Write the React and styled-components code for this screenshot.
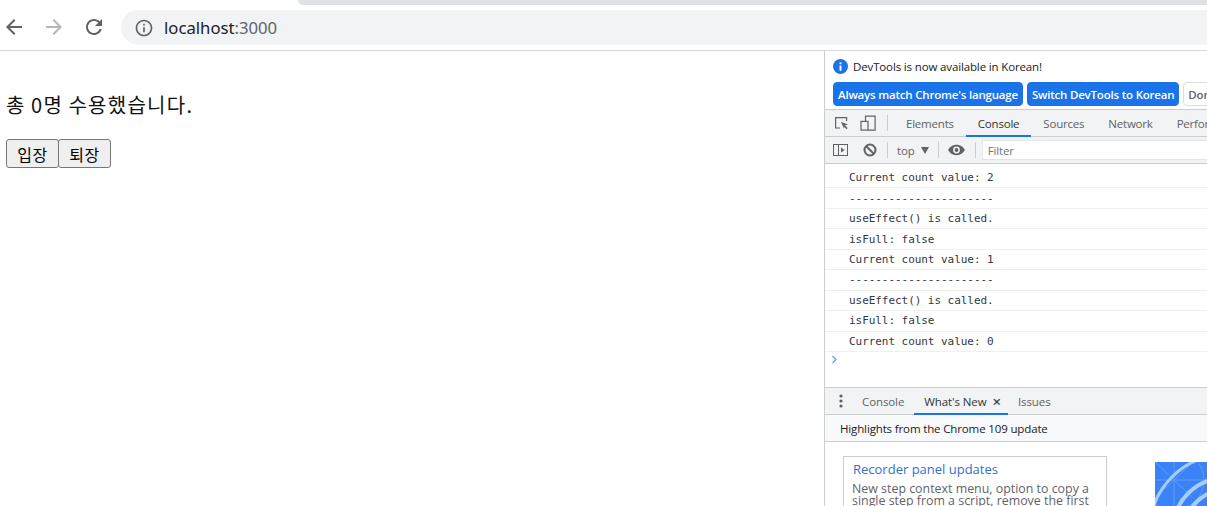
import React from 'react';
import styled, { createGlobalStyle } from 'styled-components';

const GlobalStyle = createGlobalStyle`
  html, body {
    margin: 0;
    padding: 0;
    background: #fff;
    overflow: hidden;
  }
  * {
    box-sizing: border-box;
  }
`;

const Window = styled.div`
  width: 1207px;
  height: 506px;
  overflow: hidden;
  display: flex;
  flex-direction: column;
  font-family: 'Open Sans', 'Noto Sans', sans-serif;
`;

const TabStrip = styled.div`
  height: 5px;
  margin-left: 298px;
  background: #dee1e6;
  border-bottom-left-radius: 6px;
  flex: none;
`;

const BrowserBar = styled.header`
  height: 46px;
  flex: none;
  display: flex;
  align-items: flex-start;
  padding: 5px 0 0 2px;
  border-bottom: 1px solid #d7d7d9;
`;

const NavButton = styled.div`
  width: 24px;
  height: 24px;
  margin: 5px 16px 0 0;
  flex: none;
  color: ${(p) => (p.$off ? '#b4b6b8' : '#5f6368')};
  svg {
    display: block;
    fill: currentColor;
  }
`;

const AddressBar = styled.div`
  flex: 1;
  height: 35px;
  margin-left: -1px;
  margin-right: -40px;
  background: #f1f3f4;
  border-radius: 18px;
  display: flex;
  align-items: center;
  padding-left: 13px;
  gap: 10px;
  color: #5f6368;
  font-family: 'Noto Sans', sans-serif;
  font-size: 16.7px;
  svg {
    fill: #5f6368;
    flex: none;
  }
  b {
    font-weight: 400;
    color: #202124;
  }
`;

const Body = styled.div`
  flex: 1;
  display: flex;
  min-height: 0;
`;

const Page = styled.main`
  width: 824px;
  flex: none;
  padding: 40px 0 0 6px;
  font-family: 'Noto Sans CJK KR', 'Liberation Sans', sans-serif;
  color: #111;
`;

const Headline = styled.p`
  margin: 0 0 20px;
  font-size: 20px;
  line-height: 28px;
  letter-spacing: 1.27px;
  word-spacing: -0.4px;
`;

const Buttons = styled.div`
  display: flex;
`;

const PageButton = styled.button`
  width: 53px;
  height: 29px;
  margin-right: -1px;
  padding: 0;
  font-family: inherit;
  font-size: 16px;
  line-height: 24px;
  letter-spacing: 0.5px;
  color: #000;
  background: #efefef;
  border: 1px solid #767676;
  border-radius: 3px;
`;

const DevTools = styled.aside`
  flex: 1;
  min-width: 0;
  display: flex;
  flex-direction: column;
  border-left: 1px solid #cbcdd1;
  color: #303942;
  font-size: 11.5px;
  letter-spacing: -0.14px;
  overflow: hidden;
`;

const InfoBar = styled.div`
  height: 58px;
  flex: none;
  padding: 7px 0 0 8px;
  white-space: nowrap;
`;

const InfoLine = styled.div`
  display: flex;
  align-items: center;
  gap: 5px;
  height: 16px;
  color: #202124;
`;

const InfoActions = styled.div`
  display: flex;
  gap: 4px;
  margin-top: 8px;
`;

const InfoButton = styled.div`
  height: 24px;
  padding: 0 4px;
  display: flex;
  align-items: center;
  flex: none;
  font-weight: 600;
  letter-spacing: -0.2px;
  color: ${(p) => (p.$plain ? '#5f6368' : '#fff')};
  background: ${(p) => (p.$plain ? '#fff' : '#1a73e8')};
  border: 1px solid ${(p) => (p.$plain ? '#dadce0' : '#1a73e8')};
  border-radius: 4px;
`;

const TabBar = styled.div`
  height: 28px;
  flex: none;
  display: flex;
  align-items: stretch;
  background: #f1f3f4;
  border-top: 1px solid #cbcdd1;
  border-bottom: 1px solid #cbcdd1;
  white-space: nowrap;
  letter-spacing: -0.21px;
`;

const ToolIcons = styled.div`
  display: flex;
  align-items: center;
  gap: 10px;
  padding: 0 11px 0 9px;
  color: #5f6368;
  svg {
    display: block;
    flex: none;
  }
`;

const Divider = styled.div`
  width: 1px;
  height: 16px;
  background: #cbcdd1;
  flex: none;
  align-self: center;
  margin: ${(p) => p.$m || '0 4px'};
`;

const Tab = styled.div`
  padding: 1px ${(p) => p.$pad || 12}px 0;
  display: flex;
  align-items: center;
  gap: 6px;
  color: ${(p) => (p.$active ? '#333' : '#5f6368')};
  border-bottom: 2px solid ${(p) => (p.$active ? '#1a73e8' : 'transparent')};
  margin-bottom: -1px;
`;

const FilterBar = styled.div`
  height: 27px;
  flex: none;
  display: flex;
  align-items: center;
  background: #f1f3f4;
  border-bottom: 1px solid #cbcdd1;
  white-space: nowrap;
  padding-left: 8px;
  color: #5f6368;
  svg {
    display: block;
    flex: none;
  }
`;

const TopSelect = styled.div`
  display: flex;
  align-items: center;
  gap: 6px;
  margin-right: 9px;
  color: #5f6368;
`;

const FilterInput = styled.div`
  flex: 1;
  align-self: stretch;
  margin: 3px 0;
  padding: 1px 0 0 5px;
  display: flex;
  align-items: center;
  background: #fff;
  border: 1px solid #e4e5e7;
  border-right: 0;
  color: #757575;
`;

const ConsoleArea = styled.div`
  height: 224px;
  flex: none;
  padding-top: 4px;
  border-bottom: 1px solid #cbcdd1;
  overflow: hidden;
`;

const LogRow = styled.div`
  height: 20.45px;
  padding-left: 24px;
  display: flex;
  align-items: center;
  font-family: 'DejaVu Sans Mono', monospace;
  font-size: 11px;
  letter-spacing: -0.05px;
  color: #303942;
  border-bottom: 1px solid #f0f0f0;
  white-space: pre;
`;

const Prompt = styled.div`
  padding: 3px 0 0 6px;
  svg {
    display: block;
  }
`;

const DrawerTabs = styled.div`
  height: 27px;
  flex: none;
  display: flex;
  align-items: stretch;
  background: #f1f3f4;
  border-bottom: 1px solid #cbcdd1;
  white-space: nowrap;
  letter-spacing: -0.1px;
`;

const DrawerDots = styled.div`
  width: 27px;
  padding-left: 4px;
  display: flex;
  align-items: center;
  justify-content: center;
  svg {
    display: block;
  }
`;

const CloseMark = styled.span`
  font-size: 15px;
  font-weight: 600;
  line-height: 12px;
  margin-right: -3px;
  color: #3c4043;
`;

const DrawerTitle = styled.div`
  height: 27px;
  flex: none;
  display: flex;
  align-items: center;
  padding-left: 15px;
  background: #f8f9fa;
  border-bottom: 1px solid #cbcdd1;
  color: #202124;
  white-space: nowrap;
`;

const Highlights = styled.div`
  flex: 1;
  display: flex;
  align-items: flex-start;
  min-height: 0;
  padding: 14px 0 0 18px;
  overflow: hidden;
`;

const Card = styled.div`
  width: 264px;
  height: 80px;
  flex: none;
  padding: 3px 8px;
  border: 1px solid #cbcdd1;
`;

const CardTitle = styled.div`
  margin-left: 1px;
  font-size: 13px;
  line-height: 19px;
  letter-spacing: 0;
  color: #1a5fc8;
  opacity: 0.9;
`;

const CardText = styled.div`
  font-size: 12.4px;
  line-height: 11.5px;
  letter-spacing: 0;
  margin-top: 4px;
  color: #5f6368;
`;

const Artwork = styled.svg`
  flex: none;
  display: block;
  margin: 6px 0 0 48px;
`;

const logs = [
  'Current count value: 2',
  '----------------------',
  'useEffect() is called.',
  'isFull: false',
  'Current count value: 1',
  '----------------------',
  'useEffect() is called.',
  'isFull: false',
  'Current count value: 0',
];

export default function App() {
  return (
    <Window>
      <GlobalStyle />
      <TabStrip />
      <BrowserBar>
        <NavButton>
          <svg width="24" height="24" viewBox="0 0 24 24">
            <path d="M20 11H7.83l5.59-5.59L12 4l-8 8 8 8 1.41-1.41L7.83 13H20v-2z" />
          </svg>
        </NavButton>
        <NavButton $off>
          <svg width="24" height="24" viewBox="0 0 24 24">
            <path d="M4 13h12.17l-5.59 5.59L12 20l8-8-8-8-1.41 1.41L16.17 11H4v2z" />
          </svg>
        </NavButton>
        <NavButton>
          <svg width="24" height="24" viewBox="0 0 24 24">
            <path d="M17.65 6.35C16.2 4.9 14.21 4 12 4c-4.42 0-7.99 3.58-7.99 8s3.57 8 7.99 8c3.73 0 6.84-2.55 7.73-6h-2.08c-.82 2.33-3.04 4-5.65 4-3.31 0-6-2.69-6-6s2.69-6 6-6c1.66 0 3.14.69 4.22 1.78L13 11h7V4l-2.35 2.35z" />
          </svg>
        </NavButton>
        <AddressBar>
          <svg width="20" height="20" viewBox="0 0 24 24">
            <path d="M11 7h2v2h-2zm0 4h2v6h-2zm1-9C6.48 2 2 6.48 2 12s4.48 10 10 10 10-4.48 10-10S17.52 2 12 2zm0 18c-4.41 0-8-3.59-8-8s3.59-8 8-8 8 3.59 8 8-3.59 8-8 8z" />
          </svg>
          <span>
            <b>localhost</b>:3000
          </span>
        </AddressBar>
      </BrowserBar>
      <Body>
        <Page>
          <Headline>총 0명 수용했습니다.</Headline>
          <Buttons>
            <PageButton>입장</PageButton>
            <PageButton>퇴장</PageButton>
          </Buttons>
        </Page>
        <DevTools>
          <InfoBar>
            <InfoLine>
              <svg width="15" height="15" viewBox="0 0 16 16">
                <circle cx="8" cy="8" r="8" fill="#1a73e8" />
                <rect x="7" y="7" width="2" height="5.5" fill="#fff" />
                <rect x="7" y="3.6" width="2" height="2" fill="#fff" />
              </svg>
              DevTools is now available in Korean!
            </InfoLine>
            <InfoActions>
              <InfoButton>Always match Chrome's language</InfoButton>
              <InfoButton>Switch DevTools to Korean</InfoButton>
              <InfoButton $plain>Don't show again</InfoButton>
            </InfoActions>
          </InfoBar>
          <TabBar>
            <ToolIcons>
              <svg width="16" height="16" viewBox="0 0 16 16" fill="none" stroke="#5f6368" strokeWidth="1.2">
                <path d="M6 13H1.6V2.6h11V6" />
                <path d="M7 7l7 2.6-3 1-1 3z" fill="#5f6368" stroke="none" />
                <path d="M10.5 11l2.6 2.6" strokeWidth="1.6" />
              </svg>
              <svg width="16" height="16" viewBox="0 0 16 16" fill="none" stroke="#5f6368" strokeWidth="1.2">
                <path d="M5.5 6V1.1h9.6v14H8" />
                <rect x="1" y="6.4" width="7" height="8.7" />
              </svg>
            </ToolIcons>
            <Divider $m="0 6px 0 0" />
            <Tab>Elements</Tab>
            <Tab $active>Console</Tab>
            <Tab>Sources</Tab>
            <Tab>Network</Tab>
            <Tab>Performance</Tab>
          </TabBar>
          <FilterBar>
            <svg width="16" height="14" viewBox="0 0 16 14" fill="none" stroke="#5f6368" strokeWidth="1">
              <rect x="0.5" y="1.5" width="14" height="11" />
              <path d="M5.5 1.5v11" />
              <path d="M8 4.5l3.6 2.5L8 9.500z" fill="#5f6368" stroke="none" />
            </svg>
            <svg width="16" height="16" viewBox="0 0 16 16" fill="none" stroke="#5f6368" strokeWidth="2" style={{ marginLeft: 13 }}>
              <circle cx="8" cy="8" r="5.500" />
              <path d="M4 4l8 8" />
            </svg>
            <Divider $m="0 9px" />
            <TopSelect>
              top
              <svg width="8" height="7" viewBox="0 0 8 7">
                <path d="M0 0h8L4 7z" fill="#5f6368" />
              </svg>
            </TopSelect>
            <Divider $m="0 9px 0 0" />
            <svg width="17" height="14" viewBox="0 0 18 14">
              <path fillRule="evenodd" fill="#5f6368" d="M9 1.500C5 1.500 1.700 3.800.2 7c1.500 3.200 4.800 5.500 8.800 5.500s7.300-2.300 8.800-5.500C16.300 3.800 13 1.500 9 1.500zM9 10.600A3.600 3.600 0 1 1 9 3.400a3.600 3.600 0 0 1 0 7.200zM9 5a2 2 0 1 0 0 4 2 2 0 0 0 0-4z" />
            </svg>
            <Divider $m="0 6px 0 10px" />
            <FilterInput>Filter</FilterInput>
          </FilterBar>
          <ConsoleArea>
            {logs.map((line, i) => (
              <LogRow key={i}>{line}</LogRow>
            ))}
            <Prompt>
              <svg width="7" height="9" viewBox="0 0 7 9" fill="none" stroke="#6a9fe0" strokeWidth="1.300">
                <path d="M1.500 1l3.500 3.500L1.500 8" />
              </svg>
            </Prompt>
          </ConsoleArea>
          <DrawerTabs>
            <DrawerDots>
              <svg width="4" height="14" viewBox="0 0 4 14" fill="#5f6368">
                <circle cx="2" cy="2" r="1.600" />
                <circle cx="2" cy="7" r="1.600" />
                <circle cx="2" cy="12" r="1.600" />
              </svg>
            </DrawerDots>
            <Tab $pad={10}>Console</Tab>
            <Tab $pad={10} $active>What's New <CloseMark>×</CloseMark></Tab>
            <Tab $pad={10}>Issues</Tab>
          </DrawerTabs>
          <DrawerTitle>Highlights from the Chrome 109 update</DrawerTitle>
          <Highlights>
            <Card>
              <CardTitle>Recorder panel updates</CardTitle>
              <CardText>
                New step context menu, option to copy a
                <br />
                single step from a script, remove the first
              </CardText>
            </Card>
            <Artwork width="60" height="50" viewBox="0 0 60 50">
              <rect width="60" height="50" fill="#3b82f6" />
              <g stroke="#5f9cf8" strokeWidth="1" fill="none">
                <path d="M0 0l38 36M38 0L0 36M0 18h60M19 0v50" />
                <circle cx="19" cy="18" r="30" />
              </g>
              <g stroke="#a6cdfb" fill="none">
                <circle cx="70" cy="68" r="75" strokeWidth="3" />
                <circle cx="70" cy="68" r="52" strokeWidth="4" />
                <circle cx="70" cy="68" r="40" strokeWidth="4" />
              </g>
            </Artwork>
          </Highlights>
        </DevTools>
      </Body>
    </Window>
  );
}
